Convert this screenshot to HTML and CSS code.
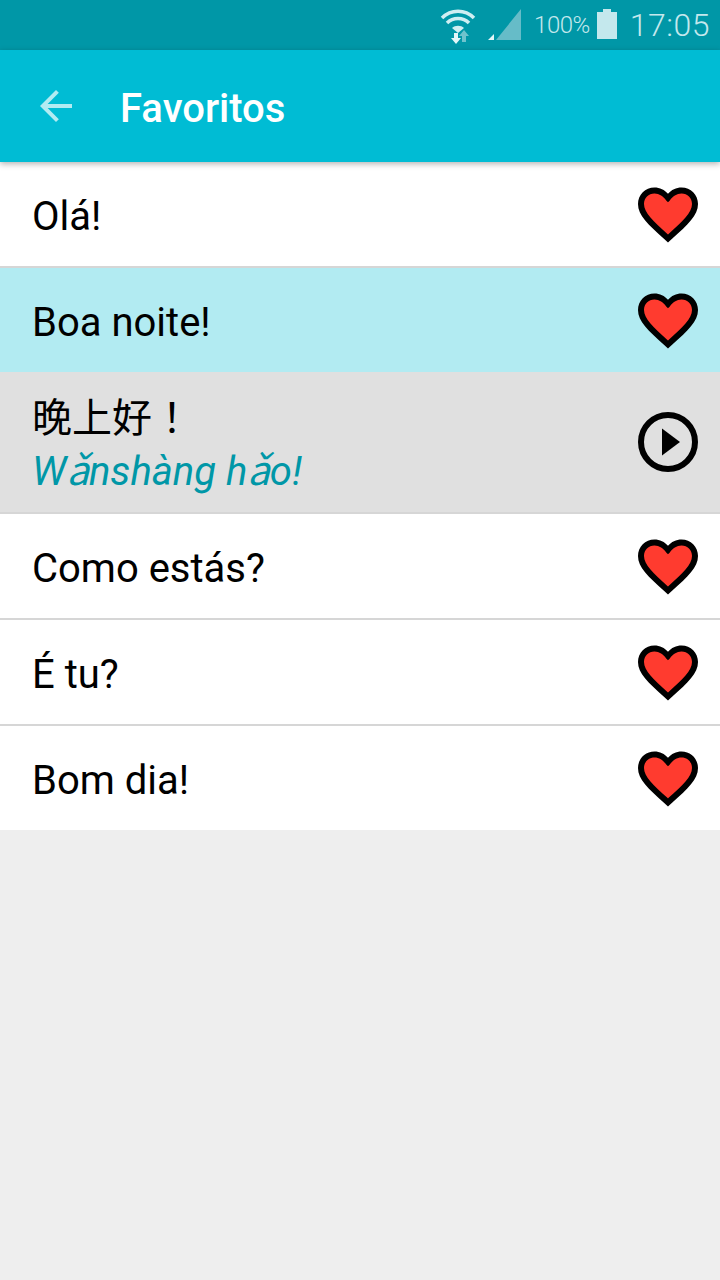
FILE: index.html
```html
<!DOCTYPE html>
<html lang="pt">
<head>
  <meta charset="UTF-8">
  <meta name="viewport" content="width=device-width, initial-scale=1.0">
  <title>Favoritos</title>
  <link rel="stylesheet" href="styles.css">
</head>
<body>
  <svg class="defs" width="0" height="0" aria-hidden="true">
    <symbol id="heart" viewBox="2 3 20 18.35">
      <path d="M12 21.35l-1.45-1.32C5.4 15.36 2 12.28 2 8.5 2 5.42 4.42 3 7.5 3c1.74 0 3.41.81 4.500 2.090C13.090 3.810 14.760 3 16.500 3 19.580 3 22 5.420 22 8.500c0 3.780-3.400 6.860-8.550 11.540L12 21.350z" fill="#000"/>
      <path d="M12.100 18.550l-.1.1-.11-.1C7.140 14.240 4 11.390 4 8.500 4 6.500 5.500 5 7.500 5c1.540 0 3.040.99 3.900 2.360L12 7.900l.6-.54C13.460 5.990 14.960 5 16.500 5c2 0 3.500 1.500 3.500 3.500 0 2.890-3.140 5.740-7.900 10.050z" fill="#ff3b2f"/>
    </symbol>
  </svg>

  <div class="statusbar">
    <svg class="st-wifi" width="36" height="36" viewBox="0 0 36 36">
      <path d="M2 10 C11 1 25 1 34 10" fill="none" stroke="#cfeef2" stroke-width="3.500"/>
      <path d="M7 15 C13 9 23 9 29 15" fill="none" stroke="#cfeef2" stroke-width="3.500"/>
      <path d="M12 20 C15 17 21 17 24 20 L18 25 Z" fill="#cfeef2"/>
      <path d="M14 25 h4 v5 h3 l-5 6 l-5 -6 h3 Z" fill="#e4f6f8"/>
      <path d="M24 22 l5 6 h-3 v6 h-4 v-6 h-3 Z" fill="#6fc3cd"/>
    </svg>
    <svg class="st-signal" width="34" height="34" viewBox="0 0 34 34">
      <path d="M33 1 V32 H8 Z" fill="#66bcc8"/>
      <path d="M6 26 V32 H0 Z" fill="#e4f6f8"/>
    </svg>
    <span class="st-pct">100%</span>
    <svg class="st-batt" width="20" height="30" viewBox="0 0 20 30">
      <path d="M6 0 H14 V3 H20 V30 H0 V3 H6 Z" fill="#c4e8ed"/>
    </svg>
    <span class="st-time">17:05</span>
  </div>

  <header class="toolbar">
    <svg class="back" width="48" height="48" viewBox="0 0 24 24">
      <path d="M20 11H7.830l5.590-5.590L12 4l-8 8 8 8 1.410-1.410L7.830 13H20v-2z" fill="#b2ebf2"/>
    </svg>
    <h1>Favoritos</h1>
  </header>

  <ul class="list">
    <li class="row">
      <span class="phrase">Olá!</span>
      <svg class="icon heart"><use href="#heart"/></svg>
    </li>
    <li class="row selected">
      <span class="phrase">Boa noite!</span>
      <svg class="icon heart"><use href="#heart"/></svg>
    </li>
    <li class="row playing">
      <div class="phrase-wrap">
        <span class="phrase cjk">晚上好！</span>
        <span class="romanized">Wǎnshàng hǎo!</span>
      </div>
      <svg class="icon" viewBox="0 0 60 60">
        <circle cx="30" cy="30" r="27" fill="none" stroke="#000" stroke-width="6"/>
        <path d="M24 16.500 L42 30 L24 43.500 Z" fill="#000"/>
      </svg>
    </li>
    <li class="row">
      <span class="phrase">Como estás?</span>
      <svg class="icon heart"><use href="#heart"/></svg>
    </li>
    <li class="row">
      <span class="phrase">É tu?</span>
      <svg class="icon heart"><use href="#heart"/></svg>
    </li>
    <li class="row last">
      <span class="phrase">Bom dia!</span>
      <svg class="icon heart"><use href="#heart"/></svg>
    </li>
  </ul>
</body>
</html>
```

FILE: styles.css
```css
/* Base */
* { box-sizing: border-box; }
body {
  margin: 0;
  height: 1280px;
  overflow: hidden;
  background-color: #eeeeee;
  font-family: Roboto, "Noto Sans CJK TC", sans-serif;
  color: #000;
}
.defs { position: absolute; }

/* Status bar */
.statusbar {
  height: 50px;
  background-color: #0097a7;
  display: flex;
  align-items: center;
  justify-content: flex-end;
  padding-right: 10px;
  color: #c4e8ed;
  font-weight: 300;
}
.st-wifi { margin-right: 12px; margin-top: 2px; }
.st-signal { margin-right: 12px; }
.st-pct { font-size: 24px; letter-spacing: -0.5px; margin-right: 7px; }
.st-batt { margin-right: 13px; margin-top: -3px; }
.st-time { font-size: 32px; letter-spacing: 0.5px; }

/* Toolbar */
.toolbar {
  height: 112px;
  background-color: #00bcd4;
  display: flex;
  align-items: center;
  padding-left: 32px;
  box-shadow: 0 2px 6px rgba(0,0,0,0.3);
  position: relative;
}
.toolbar h1 {
  margin: 0 0 0 40px;
  padding-top: 4px;
  font-size: 40px;
  line-height: 47px;
  font-weight: 500;
  color: #fff;
}

/* List */
.list {
  margin: 0;
  padding: 0;
  list-style: none;
}
.row {
  height: 106px;
  background-color: #fff;
  border-bottom: 2px solid #d6d6d6;
  display: flex;
  align-items: center;
  justify-content: space-between;
  padding: 0 22px 0 32px;
}
.row.last { height: 104px; border-bottom: none; }
.row.selected {
  height: 104px;
  background-color: #b2ebf2;
  border-bottom: none;
}
.row.playing {
  height: 142px;
  background-color: #e0e0e0;
}
.phrase { font-size: 40px; line-height: 47px; padding-top: 4px; }
.phrase-wrap { display: flex; flex-direction: column; }
.cjk { line-height: 58px; padding-top: 0; }
.romanized {
  font-size: 40px;
  line-height: 47px;
  font-style: italic;
  color: #0097a7;
}
.icon { width: 60px; height: 60px; }
.heart { margin-top: 2px; }
```
